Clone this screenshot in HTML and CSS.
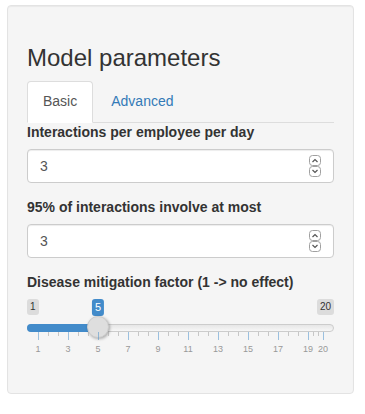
FILE: index.html
```html
<!DOCTYPE html>
<html lang="en">
  <head>
    <meta charset="UTF-8" />
    <meta name="viewport" content="width=device-width, initial-scale=1.0" />
    <title>Model parameters</title>
    <link rel="stylesheet" href="styles.css">
  </head>
  <body>
    <div class="page">
      <div class="well">
        <h3 class="title">Model parameters</h3>

        <ul class="nav-tabs">
          <li class="active"><a>Basic</a></li>
          <li><a>Advanced</a></li>
        </ul>

        <div class="tab-content">
          <div class="form-group">
            <label>Interactions per employee per day</label>
            <div class="number">
              <input type="text" class="form-control" value="3" />
              <svg class="spin" width="12" height="23" viewBox="0 0 12 23">
                <rect x="0.5" y="0.5" width="11" height="10" rx="3" />
                <rect x="0.5" y="11.5" width="11" height="10" rx="3" />
                <polyline points="3.5,7 6,4.5 8.5,7" />
                <polyline points="3.5,15 6,17.5 8.5,15" />
              </svg>
            </div>
          </div>

          <div class="form-group">
            <label>95% of interactions involve at most</label>
            <div class="number">
              <input type="text" class="form-control" value="3" />
              <svg class="spin" width="12" height="23" viewBox="0 0 12 23">
                <rect x="0.5" y="0.5" width="11" height="10" rx="3" />
                <rect x="0.5" y="11.5" width="11" height="10" rx="3" />
                <polyline points="3.5,7 6,4.5 8.5,7" />
                <polyline points="3.5,15 6,17.5 8.5,15" />
              </svg>
            </div>
          </div>

          <div class="form-group">
            <label>Disease mitigation factor (1 -&gt; no effect)</label>
            <div class="irs">
              <span class="irs-min">1</span>
              <span class="irs-max">20</span>
              <span class="irs-line"></span>
              <span class="irs-bar"></span>
              <span class="irs-single">5</span>
              <span class="irs-slider"></span>
              <div class="irs-grid">
                <span class="pol" style="left: 0%"></span>
                <span class="pol small" style="left: 3.509%"></span>
                <span class="pol small" style="left: 7.018%"></span>
                <span class="pol" style="left: 10.526%"></span>
                <span class="pol small" style="left: 14.035%"></span>
                <span class="pol small" style="left: 17.544%"></span>
                <span class="pol" style="left: 21.053%"></span>
                <span class="pol small" style="left: 24.561%"></span>
                <span class="pol small" style="left: 28.07%"></span>
                <span class="pol" style="left: 31.579%"></span>
                <span class="pol small" style="left: 35.088%"></span>
                <span class="pol small" style="left: 38.596%"></span>
                <span class="pol" style="left: 42.105%"></span>
                <span class="pol small" style="left: 45.614%"></span>
                <span class="pol small" style="left: 49.123%"></span>
                <span class="pol" style="left: 52.632%"></span>
                <span class="pol small" style="left: 56.14%"></span>
                <span class="pol small" style="left: 59.649%"></span>
                <span class="pol" style="left: 63.158%"></span>
                <span class="pol small" style="left: 66.667%"></span>
                <span class="pol small" style="left: 70.175%"></span>
                <span class="pol" style="left: 73.684%"></span>
                <span class="pol small" style="left: 77.193%"></span>
                <span class="pol small" style="left: 80.702%"></span>
                <span class="pol" style="left: 84.211%"></span>
                <span class="pol small" style="left: 87.719%"></span>
                <span class="pol small" style="left: 91.228%"></span>
                <span class="pol" style="left: 94.737%"></span>
                <span class="pol small" style="left: 96.491%"></span>
                <span class="pol small" style="left: 98.246%"></span>
                <span class="pol" style="left: 100%"></span>

                <span class="grid-text" style="left: 0%">1</span>
                <span class="grid-text" style="left: 10.526%">3</span>
                <span class="grid-text" style="left: 21.053%">5</span>
                <span class="grid-text" style="left: 31.579%">7</span>
                <span class="grid-text" style="left: 42.105%">9</span>
                <span class="grid-text" style="left: 52.632%">11</span>
                <span class="grid-text" style="left: 63.158%">13</span>
                <span class="grid-text" style="left: 73.684%">15</span>
                <span class="grid-text" style="left: 84.211%">17</span>
                <span class="grid-text" style="left: 94.737%">19</span>
                <span class="grid-text" style="left: 100%">20</span>
              </div>
            </div>
          </div>
        </div>
      </div>
    </div>
  </body>
</html>
```

FILE: styles.css
```css
* {
  margin: 0;
  padding: 0;
  box-sizing: border-box;
}

body {
  font-family: "Liberation Sans", Arial, sans-serif;
  font-size: 14px;
  line-height: 1.42857;
  color: #333;
  background: #fff;
}

.page {
  padding: 5px 11px 0 7px;
}

.well {
  background: #f5f5f5;
  border: 1px solid #e3e3e3;
  border-radius: 4px;
  padding: 19px;
  box-shadow: inset 0 1px 1px rgba(0, 0, 0, 0.05);
}

.title {
  font-size: 24px;
  font-weight: 500;
  line-height: 1.1;
  margin: 20px 0 10px;
}

/* tabs */
.nav-tabs {
  list-style: none;
  display: flex;
  border-bottom: 1px solid #ddd;
}

.nav-tabs li {
  margin-bottom: -1px;
  margin-right: 2px;
}

.nav-tabs a {
  display: block;
  padding: 10px 15px;
  border: 1px solid transparent;
  border-radius: 4px 4px 0 0;
  color: #337ab7;
  cursor: pointer;
}

.nav-tabs li.active a {
  color: #555;
  background: #fff;
  border-color: #ddd #ddd transparent;
}

/* form */
.form-group {
  margin-bottom: 15px;
}

.form-group label {
  display: inline-block;
  font-weight: bold;
  margin-bottom: 6px;
}

.number {
  position: relative;
}

.form-control {
  display: block;
  width: 100%;
  height: 34px;
  padding: 6px 12px;
  font: inherit;
  color: #555;
  background: #fff;
  border: 1px solid #ccc;
  border-radius: 4px;
  box-shadow: inset 0 1px 1px rgba(0, 0, 0, 0.075);
  outline: none;
}

.spin {
  position: absolute;
  right: 13px;
  top: 6px;
  fill: #fff;
  stroke: #a0a0a0;
  stroke-width: 1;
}

.spin polyline {
  fill: none;
  stroke: #555;
  stroke-width: 1.2;
}

/* range slider */
.irs {
  position: relative;
  height: 60px;
}

.irs-min,
.irs-max {
  position: absolute;
  top: 0;
  padding: 1px 3px;
  font-size: 10px;
  line-height: 1.333;
  color: #333;
  background: rgba(0, 0, 0, 0.1);
  border-radius: 3px;
}

.irs-min {
  left: 0;
}

.irs-max {
  right: 0;
}

.irs-line {
  position: absolute;
  top: 25px;
  left: 0;
  right: 0;
  height: 8px;
  border: 1px solid #ccc;
  border-radius: 16px;
  background: linear-gradient(to bottom, #dedede -50%, #fff 150%);
}

.irs-bar {
  position: absolute;
  top: 25px;
  left: 0;
  height: 8px;
  width: calc((100% - 22px) * 0.21053 + 11px);
  background: #428bca;
  border-radius: 16px 0 0 16px;
}

.irs-single {
  position: absolute;
  top: 0;
  left: calc((100% - 22px) * 0.21053 + 11px);
  transform: translateX(-50%);
  padding: 1px 3px;
  font-size: 11px;
  line-height: 1.333;
  color: #fff;
  background: #428bca;
  border-radius: 3px;
}

.irs-slider {
  position: absolute;
  top: 17px;
  left: calc((100% - 22px) * 0.21053);
  width: 22px;
  height: 22px;
  border: 1px solid #ccc;
  border-radius: 50%;
  background: #dedede;
  box-shadow: 1px 1px 3px rgba(0, 0, 0, 0.3);
}

.irs-grid {
  position: absolute;
  left: 11px;
  right: 11px;
  bottom: 0;
  height: 27px;
}

.pol {
  position: absolute;
  top: 0;
  width: 1px;
  height: 8px;
  background: #428bca;
  opacity: 0.5;
}

.pol.small {
  height: 4px;
  background: #999;
}

.grid-text {
  position: absolute;
  bottom: 5px;
  transform: translateX(-50%);
  font-size: 9px;
  line-height: 9px;
  color: #999;
  white-space: nowrap;
}
```
